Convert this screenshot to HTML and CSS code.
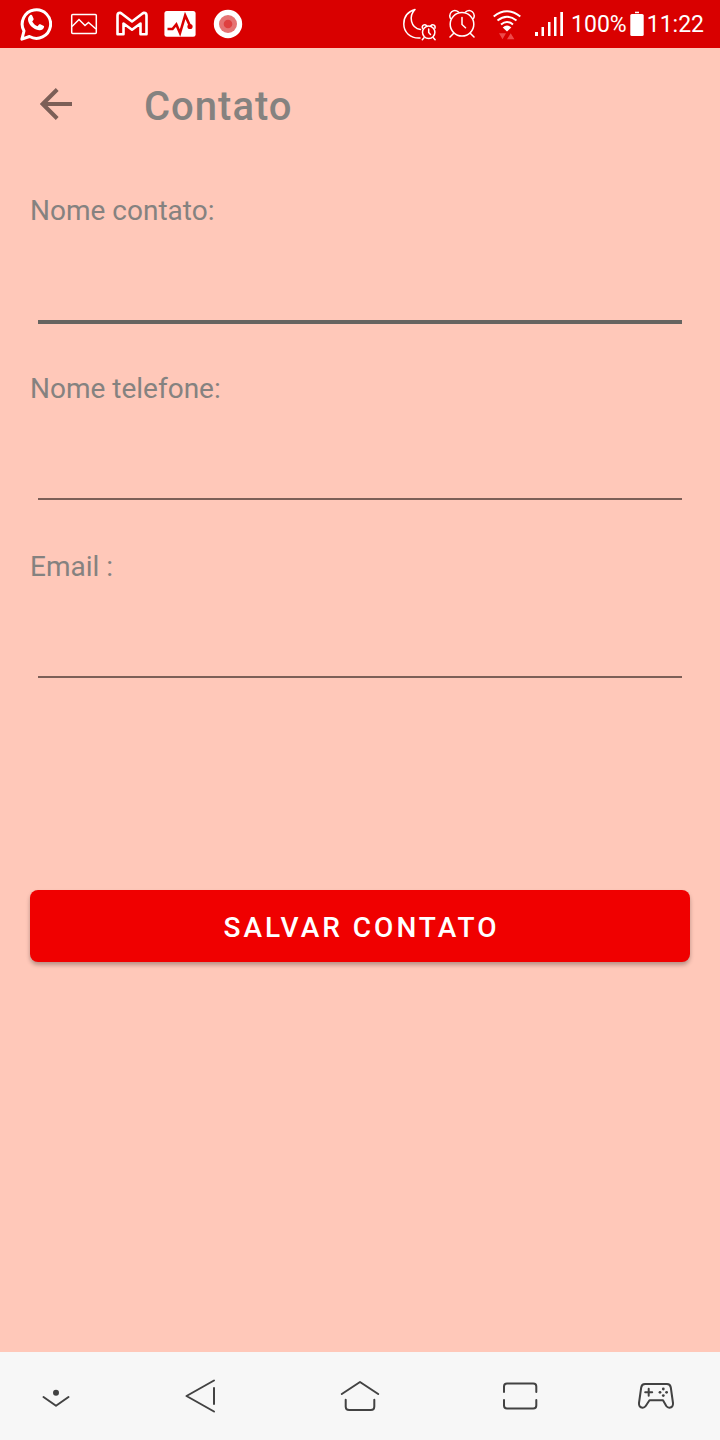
FILE: index.html
```html
<!DOCTYPE html>
<html lang="pt-BR">
<head>
<meta charset="utf-8">
<meta name="viewport" content="width=device-width, initial-scale=1">
<title>Contato</title>
<link rel="stylesheet" href="styles.css">
</head>
<body>
<div class="screen">
  <div class="status-bar">
    <div class="notifications">
      <svg class="notification" viewBox="0 0 32 36" fill="none" stroke="#fff" stroke-width="3" aria-label="WhatsApp">
        <path d="M1.900 33.200 4 25A14.200 14.200 0 1 1 9.500 30.500Z" stroke-linejoin="round"/>
        <path d="M10 9.300c.8-.7 1.900-.6 2.300.4l1.300 3c.2.600 0 1-.4 1.500l-1 1.200c1.300 2.300 3.100 3.900 5.400 4.900l1.400-1.700c.4-.5.900-.5 1.400-.3l3 1.500c.7.400.8.700.6 1.500-.6 2.300-2.700 3.300-4.800 3-6.200-1-10.800-5.700-11.200-10.600-.1-1.700.7-3.300 2-4.400z" fill="#fff" stroke="none"/>
      </svg>
      <svg class="notification" viewBox="0 0 32 36" fill="none" stroke="#fff" stroke-width="1.500" aria-label="Imagem">
        <rect x="3.700" y="8.500" width="24.600" height="19" rx="1"/>
        <path d="M4 20.500 11 13.500l6 6 3.500-3 7.500 6.500"/>
      </svg>
      <svg class="notification" viewBox="0 0 32 36" fill="none" stroke="#fff" stroke-width="2.600" stroke-linejoin="round" aria-label="Gmail">
        <path d="M1.500 9.500Q1.500 6.700 4 6.700L5.500 7.500 16 15.500 26.500 7.500 28 6.700Q30.500 6.700 30.500 9.500V28.300H24.500V17.500L16 23.700 7.500 17.500V28.300H1.500Z"/>
      </svg>
      <svg class="notification" viewBox="0 0 32 36" fill="none" aria-label="Atividade">
        <rect x=".4" y="5" width="31.200" height="25.700" rx="2.500" fill="#fff"/>
        <path d="M3.500 23H8.500L12.300 18.500 16 27 21.200 9.500 26.500 21" stroke="#d90000" stroke-width="2.600"/>
        <circle cx="26" cy="20.500" r="2.600" fill="#d90000"/>
      </svg>
      <svg class="notification" viewBox="0 0 32 36" aria-label="Gravador">
        <circle cx="16" cy="18" r="14.200" fill="#fff"/>
        <circle cx="16" cy="18" r="9" fill="#e57373"/>
        <circle cx="16" cy="18" r="4.300" fill="#df4040"/>
      </svg>
    </div>
    <div class="indicators">
      <svg class="ind-moon" viewBox="0 0 36 36" fill="none" stroke="#fff" stroke-width="1.500" stroke-linecap="round" stroke-linejoin="round" aria-label="Não perturbe">
        <path d="M17 32C7 32.500.8 26 .8 18 .8 11 5 5.500 12 3.500 5.500 10 7.500 22 17.500 23.500"/>
        <circle cx="25.700" cy="26.300" r="6.200"/>
        <path d="M25.700 23v3.500l1.800 2M19.500 22.200C18.500 19.500 21.500 17.500 23.700 19.700M31.900 22.200C32.900 19.500 29.900 17.500 27.700 19.700M21 31.700l-1.700 2M30.400 31.700l1.700 2"/>
      </svg>
      <svg class="ind-alarm" viewBox="0 0 28 36" fill="none" stroke="#fff" stroke-width="1.500" stroke-linecap="round" aria-label="Alarme">
        <circle cx="14" cy="18.300" r="11.800"/>
        <path d="M14 11.500v7l3.500 3.200M2.500 12.500C0 7.500 5.500 1.800 10.500 6M25.500 12.500C28 7.500 22.500 1.800 17.500 6M5.500 27.500l-3.500 3.500M22.500 27.500l3.500 3.500"/>
      </svg>
      <svg class="ind-wifi" viewBox="0 0 28 36" fill="none" stroke="#fff" stroke-width="2" aria-label="Wi-Fi">
        <path d="M.7 10.500q13.300-10.500 26.600 0M4.500 14.500q9.500-7.500 19 0M8 18.500q6-5 12 0"/>
        <path d="M9.700 21.500q4.300-3.800 8.600 0L14 25.500z" fill="#fff" stroke="none"/>
        <path d="M6 27.300h7l-3.500 6zM14 33.300l3.700-6 3.700 6z" fill="#ed4a4a" stroke="none"/>
      </svg>
      <svg class="ind-signal" viewBox="0 0 28 36" fill="#fff" aria-label="Sinal">
        <path d="M0 26h3v4H0zM6.500 21h2.500v9H6.500zM13 16h2.500v14H13zM19 11h2.500v19H19zM25.300 6H28v24h-2.700z"/>
      </svg>
      <span class="reading">100%</span>
      <svg class="ind-battery" viewBox="0 0 14 36" fill="#fff" aria-label="Bateria">
        <rect x="5" y="5.700" width="4" height="1.500"/>
        <rect x=".3" y="8" width="13.400" height="22" rx="1.500"/>
      </svg>
      <time class="reading">11:22</time>
    </div>
  </div>

  <header class="app-bar">
    <button class="back" type="button" aria-label="Voltar">
      <svg class="back-icon" viewBox="0 0 32 32" fill="none" stroke="#7c5f57" stroke-width="4">
        <path d="M32 16H3M17.200 1.500 2.700 16 17.200 30.500"/>
      </svg>
    </button>
    <h1 class="title">Contato</h1>
  </header>

  <main class="content">
    <form class="form">
      <div class="field">
        <label class="label" for="nome">Nome contato:</label>
        <input class="input input-active" id="nome" type="text">
      </div>
      <div class="field">
        <label class="label" for="telefone">Nome telefone:</label>
        <input class="input" id="telefone" type="tel">
      </div>
      <div class="field">
        <label class="label" for="email">Email :</label>
        <input class="input" id="email" type="email">
      </div>
      <button class="save" type="submit">SALVAR CONTATO</button>
    </form>
  </main>

  <nav class="nav-bar">
    <button class="nav-button" type="button" aria-label="Ocultar">
      <svg class="nav-icon" viewBox="0 0 40 40"><circle class="dot" cx="20" cy="16.700" r="3"/><path d="M7.500 21 20 29.700 32.500 21"/></svg>
    </button>
    <button class="nav-button" type="button" aria-label="Voltar ao anterior">
      <svg class="nav-icon" viewBox="0 0 40 40"><path d="M34 4.500 6.500 20 34 35.500M34 12V28"/></svg>
    </button>
    <button class="nav-button" type="button" aria-label="Início">
      <svg class="nav-icon" viewBox="0 0 40 40"><path d="M1.800 18 20 6 38.200 18M5.700 23.700V30.500Q5.700 34 9.200 34H30.800Q34.300 34 34.300 30.500V23.700"/></svg>
    </button>
    <button class="nav-button" type="button" aria-label="Recentes">
      <svg class="nav-icon" viewBox="0 0 40 40"><path d="M4 16V10.500Q4 7.500 7 7.500H33.300Q36.300 7.500 36.300 10.500V16M4 24V29.500Q4 32.500 7 32.500H33.300Q36.300 32.500 36.300 29.500V24"/></svg>
    </button>
    <button class="nav-button" type="button" aria-label="Jogos">
      <svg class="nav-icon" viewBox="0 0 40 40">
        <path d="M9 8H31Q34.300 8 34.800 11.500L37 27Q37.300 31.500 33.500 31.700 31.500 31.800 30.300 30L27 24.300H13.500L9.700 30Q8.500 31.800 6.500 31.700 2.700 31.500 3 27L5.200 11.500Q5.700 8 9 8Z"/>
        <path d="M12.700 12.800V19.800M9.200 16.300H16.200"/>
        <circle class="dot" cx="27.300" cy="13" r="1.400"/><circle class="dot" cx="27.300" cy="19.600" r="1.400"/>
        <circle class="dot" cx="24" cy="16.300" r="1.400"/><circle class="dot" cx="30.600" cy="16.300" r="1.400"/>
      </svg>
    </button>
  </nav>
</div>
</body>
</html>
```
FILE: styles.css
```css
* {
  box-sizing: border-box;
}

body {
  margin: 0;
  background: #ffc8b9;
  font-family: Roboto, "Liberation Sans", sans-serif;
}

button {
  border: 0;
  padding: 0;
  background: none;
  font-family: inherit;
}

svg {
  display: block;
  flex: none;
}

.screen {
  display: flex;
  flex-direction: column;
  min-height: 100vh;
}

.status-bar {
  display: flex;
  justify-content: space-between;
  align-items: center;
  height: 48px;
  padding: 0 16px 0 20px;
  background: #d90000;
  color: #fff;
  font-size: 23px;
  line-height: 28px;
}

.notifications {
  display: flex;
  gap: 16px;
}

.notification {
  width: 32px;
  height: 36px;
}

.indicators {
  display: flex;
  align-items: center;
}

.reading {
  padding-top: 2px;
}

.ind-moon {
  width: 36px;
  height: 36px;
  margin-right: 9px;
}

.ind-alarm {
  width: 28px;
  height: 36px;
  margin-right: 17px;
}

.ind-wifi {
  width: 28px;
  height: 36px;
  margin-right: 14px;
}

.ind-signal {
  width: 28px;
  height: 36px;
  margin-right: 8px;
}

.ind-battery {
  width: 14px;
  height: 36px;
  margin: 0 3px;
}

.app-bar {
  display: flex;
  align-items: center;
  height: 112px;
  padding-left: 40px;
}

.back {
  width: 32px;
  height: 32px;
  margin-right: 72px;
}

.back-icon {
  width: 32px;
  height: 32px;
}

.title {
  margin: 0;
  padding-top: 6px;
  color: #858280;
  font-size: 40px;
  font-weight: 500;
  line-height: 48px;
  letter-spacing: 1px;
}

.content {
  flex: 1;
  padding: 30px;
}

.form,
.field {
  display: flex;
  flex-direction: column;
}

.field {
  height: 178px;
}

.label {
  color: #858280;
  font-size: 28px;
  line-height: 42px;
}

.input {
  height: 90px;
  margin: 0 8px;
  border: 0;
  border-bottom: 2px solid #7c5f57;
  padding: 0 0 8px;
  outline: 0;
  background: none;
  color: #333;
  font-family: inherit;
  font-size: 36px;
}

.input-active {
  height: 92px;
  border-bottom: 4px solid #666460;
}

.save {
  height: 72px;
  margin-top: 166px;
  border-radius: 8px;
  padding: 2px 0 0 3px;
  background: #f00000;
  box-shadow: 0 3px 4px rgba(0, 0, 0, 0.28);
  color: #fff;
  font-size: 28px;
  font-weight: 500;
  letter-spacing: 3px;
}

.nav-bar {
  display: grid;
  grid-template-columns: 120px 1fr 1fr 1fr 120px;
  height: 88px;
  background: #f7f7f7;
}

.nav-button {
  display: flex;
  align-items: center;
  justify-content: center;
}

.nav-button:first-child,
.nav-button:last-child {
  padding-right: 8px;
}

.nav-icon {
  width: 40px;
  height: 40px;
  fill: none;
  stroke: #424242;
  stroke-width: 2;
  stroke-linecap: round;
  stroke-linejoin: round;
}

.dot {
  fill: #424242;
  stroke: none;
}
```
